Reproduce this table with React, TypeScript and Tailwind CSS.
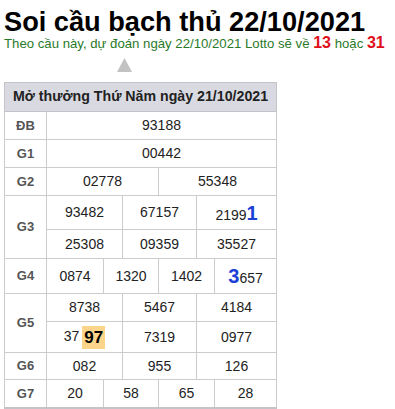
import React from "react";

const F = { fontFamily: '"Liberation Sans", Arial, sans-serif' };

const td = "border border-[#cccccc] text-center align-middle p-0 text-[14px] text-[#222]";
const lb = "border border-[#cccccc] text-center align-middle p-0 text-[13px] font-bold text-[#555]";

export default function App() {
  return (
    <div className="bg-white w-[395px] h-[409px] overflow-hidden" style={F}>
      <div className="pt-[8px] pl-[4px] text-[27.2px] leading-[27px] font-bold text-black whitespace-nowrap">
        Soi cầu bạch thủ 22/10/2021
      </div>
      <div className="pl-[4px] text-[13.2px] leading-[16px] text-[#2a7a2a] whitespace-nowrap">
        Theo cầu này, dự đoán ngày 22/10/2021 Lotto sẽ về{" "}
        <span className="text-[16px] font-bold text-[#e0101a]">13</span> hoặc{" "}
        <span className="text-[16px] font-bold text-[#e0101a]">31</span>
      </div>
      <div className="mt-[6px] ml-[117px] h-[14px] w-[15px]">
        <svg width="15" height="14" viewBox="0 0 15 14">
          <polygon points="7.5,0 15,14 0,14" fill="#c2c2c2" />
        </svg>
      </div>
      <table className="mt-[10px] ml-[4px] w-[272px] table-fixed border-collapse border border-[#c4c4c8] border-b-2">
        <colgroup>
          <col className="w-[42px]" />
          <col className="w-[57px]" />
          <col className="w-[19px]" />
          <col className="w-[36px]" />
          <col className="w-[38px]" />
          <col className="w-[18px]" />
          <col className="w-[62px]" />
        </colgroup>
        <tbody>
          <tr className="h-[29px]">
            <td colSpan={7} className="border border-[#c4c4c8] bg-[#d9dae1] text-center align-middle p-0 text-[14.2px] font-bold text-[#222]">
              Mở thưởng Thứ Năm ngày 21/10/2021
            </td>
          </tr>
          <tr className="h-[28px]">
            <td className={lb}>ĐB</td>
            <td colSpan={6} className={td}>93188</td>
          </tr>
          <tr className="h-[28px]">
            <td className={lb}>G1</td>
            <td colSpan={6} className={td}>00442</td>
          </tr>
          <tr className="h-[28px]">
            <td className={lb}>G2</td>
            <td colSpan={3} className={td}>02778</td>
            <td colSpan={3} className={td}>55348</td>
          </tr>
          <tr className="h-[34px]">
            <td rowSpan={2} className={lb}>G3</td>
            <td colSpan={2} className={td}>93482</td>
            <td colSpan={2} className={td}>67157</td>
            <td colSpan={2} className={td}>
              2199<span className="text-[20px] font-bold text-[#1d3fd6]">1</span>
            </td>
          </tr>
          <tr className="h-[29px]">
            <td colSpan={2} className={td}>25308</td>
            <td colSpan={2} className={td}>09359</td>
            <td colSpan={2} className={td}>35527</td>
          </tr>
          <tr className="h-[35px]">
            <td className={lb}>G4</td>
            <td className={td}>0874</td>
            <td colSpan={2} className={td}>1320</td>
            <td colSpan={2} className={td}>1402</td>
            <td className={td}>
              <span className="text-[20px] font-bold text-[#1d3fd6]">3</span>657
            </td>
          </tr>
          <tr className="h-[28px]">
            <td rowSpan={2} className={lb}>G5</td>
            <td colSpan={2} className={td}>8738</td>
            <td colSpan={2} className={td}>5467</td>
            <td colSpan={2} className={td}>4184</td>
          </tr>
          <tr className="h-[31px]">
            <td colSpan={2} className={td}>
              37
              <span className="ml-[3px] inline-block bg-[#fcd48a] px-[2px] text-[17px] leading-[23px] font-bold text-black align-middle">
                97
              </span>
            </td>
            <td colSpan={2} className={td}>7319</td>
            <td colSpan={2} className={td}>0977</td>
          </tr>
          <tr className="h-[27px]">
            <td className={lb}>G6</td>
            <td colSpan={2} className={td}>082</td>
            <td colSpan={2} className={td}>955</td>
            <td colSpan={2} className={td}>126</td>
          </tr>
          <tr className="h-[28px]">
            <td className={lb}>G7</td>
            <td className={td}>20</td>
            <td colSpan={2} className={td}>58</td>
            <td colSpan={2} className={td}>65</td>
            <td className={td}>28</td>
          </tr>
        </tbody>
      </table>
    </div>
  );
}
